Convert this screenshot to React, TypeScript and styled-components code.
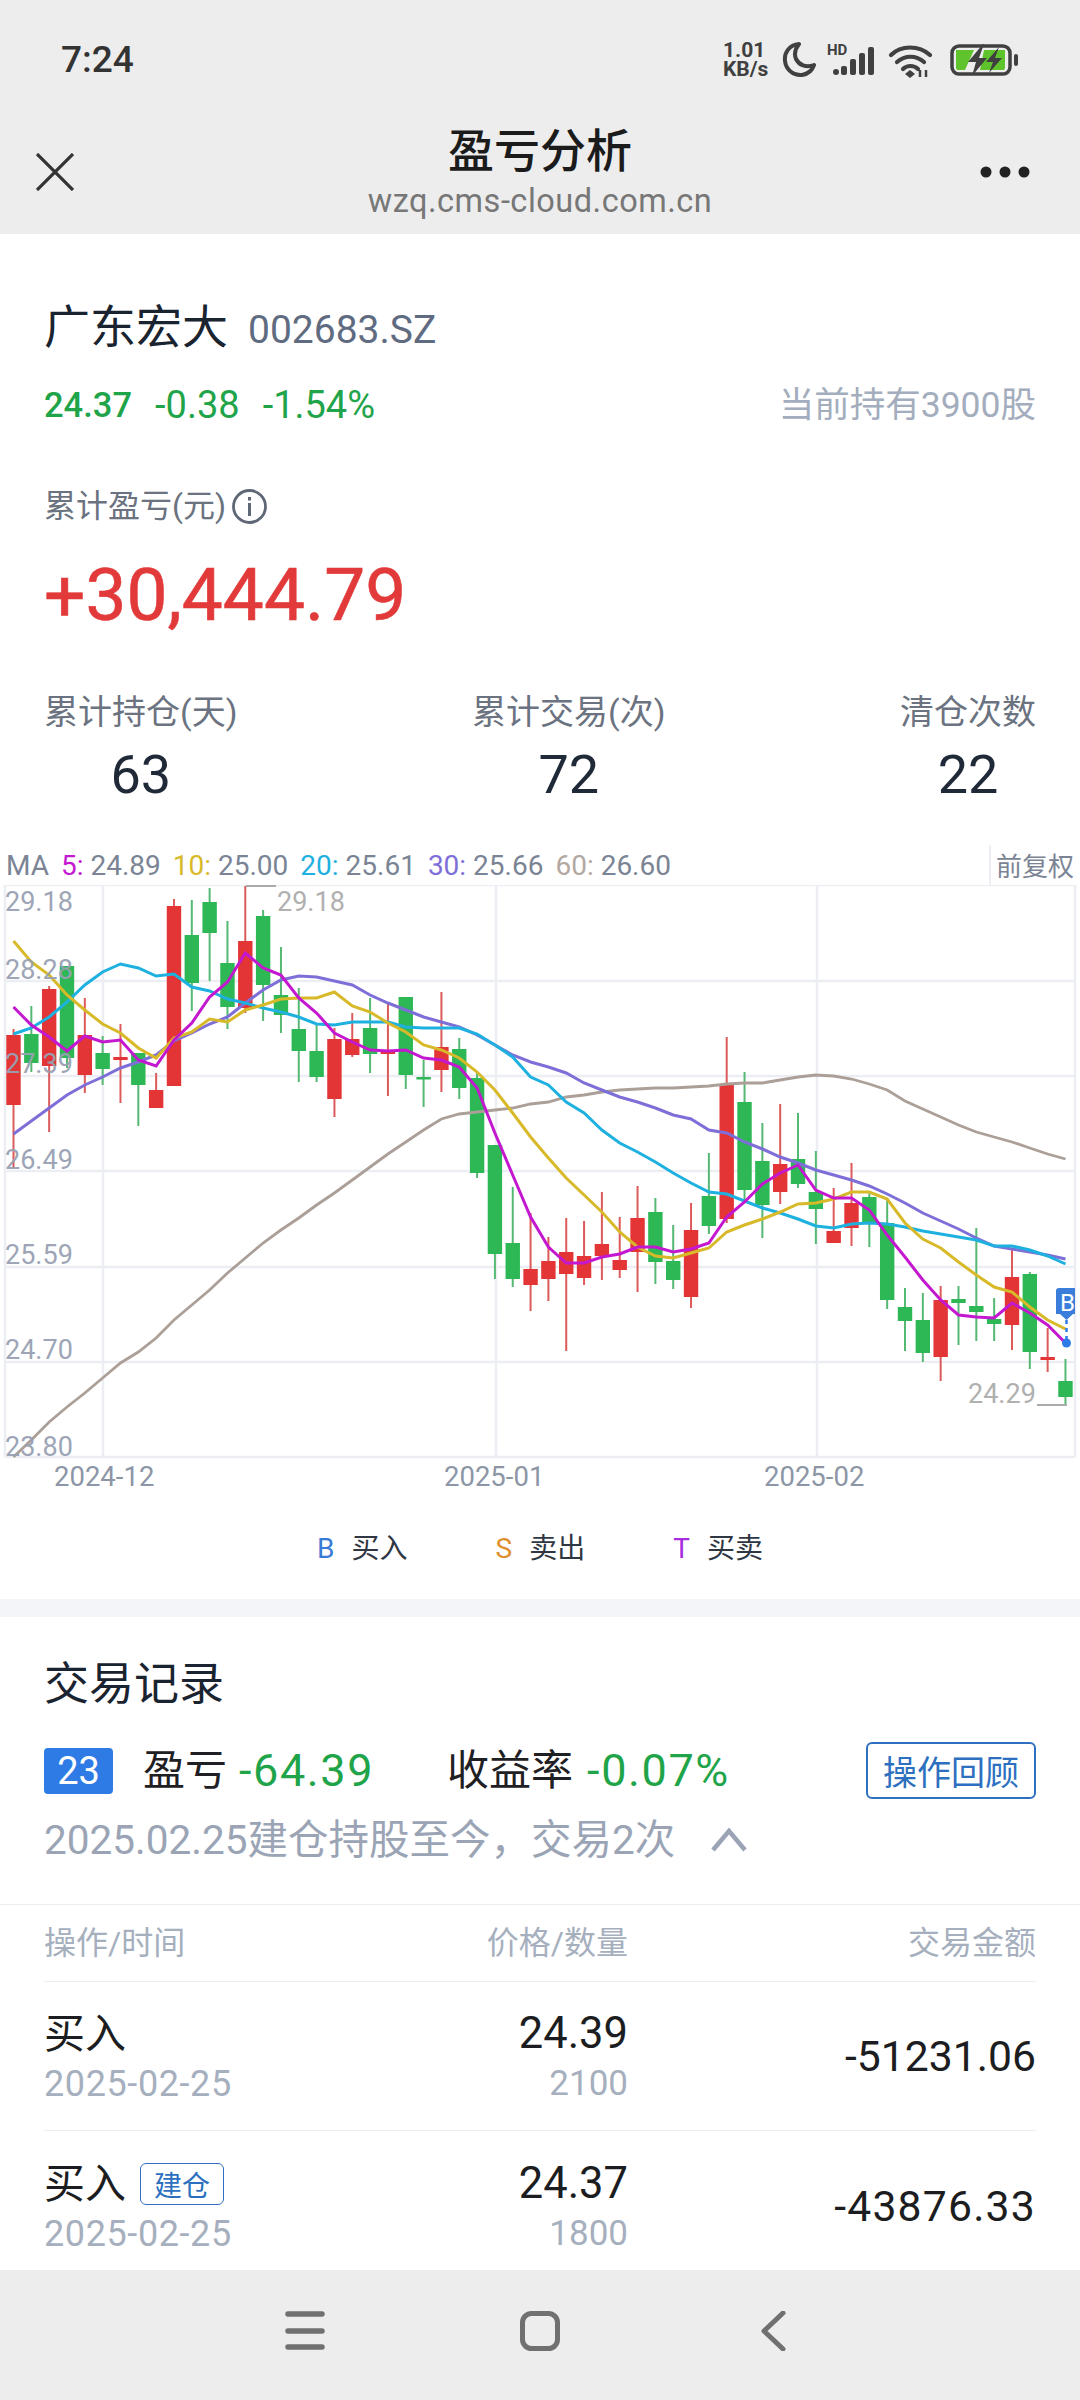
import React from 'react';
import styled, { createGlobalStyle } from 'styled-components';

const CJK = '"Noto Sans CJK SC", sans-serif';
const FONT = `Roboto, ${CJK}`;

const Global = createGlobalStyle`
  html, body { margin: 0; padding: 0; background: #fff; }
  body { font-family: ${FONT}; }
  * { box-sizing: border-box; }
`;

const Page = styled.div`
  width: 1080px; height: 2400px; overflow: hidden; background: #fff;
  display: flex; flex-direction: column; font-family: ${FONT};
  > * { flex: none; }
`;
const Chrome = styled.header`
  background: #ededed; height: 234px; display: flex; flex-direction: column;
`;
const StatusBar = styled.div`
  height: 119px; padding: 0 60px 0 61px; display: flex; align-items: center; justify-content: space-between;
`;
const Clock = styled.span`
  font-size: 37px; font-weight: 500; color: #333; font-family: Roboto, sans-serif;
`;
const StatusIcons = styled.div`
  display: flex; align-items: center; height: 40px;
`;
const Speed = styled.div`
  width: 57px; display: flex; flex-direction: column; font: 700 21px/19px Roboto, sans-serif; color: #404040;
`;
const NavBar = styled.div`
  height: 115px; padding: 0 50px 13px 36px; display: grid; grid-template-columns: 108px 1fr 94px; align-items: center;
`;
const TitleBlock = styled.div`
  align-self: start; display: flex; flex-direction: column; align-items: center;
`;
const PageTitle = styled.div`
  font: 500 46px/56px ${CJK}; color: #1b1b1b;
`;
const PageUrl = styled.div`
  margin-top: 2px; font: 400 32.5px/48px Roboto, sans-serif; color: #777; letter-spacing: .5px;
`;
const MoreIcon = styled.svg`
  justify-self: end;
`;

const Summary = styled.section`
  padding: 63px 44px 0 44px;
`;
const NameRow = styled.div`
  height: 52px; display: flex; align-items: baseline; gap: 20px;
`;
const StockName = styled.span`
  font: 400 46px/52px ${CJK}; color: #1a2330;
`;
const StockCode = styled.span`
  font: 400 39px/52px Roboto, sans-serif; color: #5f6b80;
`;
const PriceRow = styled.div`
  height: 50px; margin-top: 31px; display: flex; align-items: center; gap: 23px;
`;
const Quote = styled.span<{ $strong?: boolean }>`
  font: ${p => (p.$strong ? '500 34.5px' : '400 38px')}/50px Roboto, sans-serif; color: #1fa44a;
`;
const Holding = styled.span`
  margin-left: auto; font: 400 35.5px/50px ${FONT}; color: #a3adbd;
`;
const ProfitLabel = styled.div`
  height: 44px; margin-top: 54px; display: flex; align-items: center; gap: 6px;
  font: 400 32px/44px ${FONT}; color: #6b7280;
`;
const ProfitValue = styled.div`
  height: 90px; margin-top: 22px; font: 400 73px/90px Roboto, sans-serif; color: #e23a3a;
  -webkit-text-stroke: .6px #e23a3a;
`;
const Stats = styled.div`
  margin-top: 50px; display: flex; justify-content: space-between;
`;
const Stat = styled.div`
  display: flex; flex-direction: column; align-items: center;
`;
const StatLabel = styled.div`
  font: 400 34px/44px ${FONT}; color: #6b7280;
`;
const StatValue = styled.div`
  margin-top: 11px; font: 400 54px/60px Roboto, sans-serif; color: #1f2937;
`;

const MaLegend = styled.div`
  margin-top: 40px; height: 40px; padding: 2px 5px 0 6px; display: flex; align-items: center;
  font: 400 28px/38px Roboto, sans-serif; color: #7b8494; white-space: nowrap; gap: 12px;
`;
const MaItem = styled.span``;
const MaKey = styled.span<{ $c: string }>`
  color: ${p => p.$c};
`;
const AdjustBox = styled.div`
  margin-left: auto; width: 86px; height: 40px; margin-top: -2px; border-left: 2px solid #eceef3; padding-left: 5px;
  font: 400 26px/40px ${CJK}; color: #7b8494;
`;
const ChartSvg = styled.svg`
  display: block; width: 1080px; height: 612px; flex: none;
`;
const TradeLegend = styled.div`
  height: 102px; display: flex; justify-content: center; align-items: center; gap: 88px;
  padding-top: 2px;
`;
const TradeKey = styled.span`
  display: flex; align-items: center; gap: 17px; font: 400 28px/40px ${FONT}; color: #2f3743;
`;
const KeyLetter = styled.span<{ $c: string }>`
  color: ${p => p.$c}; font-size: 28px;
`;
const Band = styled.div`
  height: 18px; background: #f4f5f9;
`;
const Records = styled.section`
  height: 653px; overflow: hidden; display: flex; flex-direction: column;
`;
const RecordsHead = styled.div`
  padding: 0 44px;
`;
const RecordsTitle = styled.h2`
  margin: 37px 0 0; font: 400 45px/54px ${CJK}; color: #1a2330;
`;
const TradeLine = styled.div`
  height: 58px; margin-top: 33.5px; display: flex; align-items: center;
`;
const TradeIndex = styled.span`
  width: 69px; height: 46px; background: #2f7be6; border-radius: 4px; color: #fff;
  display: flex; align-items: center; justify-content: center; font: 400 38px/46px Roboto, sans-serif;
`;
const TradeMetric = styled.span<{ $left: number; $gap: number }>`
  margin-left: ${p => p.$left}px; font: 400 42px/58px ${FONT}; color: #1f2023; display: flex; gap: ${p => p.$gap}px;
`;
const TradeGreen = styled.span`
  color: #1fa44a; font-size: 45px; letter-spacing: 1.6px;
`;
const ReviewButton = styled.button`
  margin-left: auto; width: 170px; height: 57px; border: 2px solid #2f6fbf; border-radius: 6px; background: #fff;
  color: #2d70c0; font: 400 34px/52px ${CJK}; padding: 0; white-space: nowrap;
`;
const HistoryNote = styled.div`
  margin-top: 15.5px; height: 50px; display: flex; align-items: center; gap: 36px;
  font: 400 40.5px/50px ${FONT}; color: #9aa4b5;
`;
const FullRule = styled.div`
  height: 1px; margin-top: 39px; background: #ececec; flex: none;
`;
const Table = styled.div`
  padding: 0 44px;
`;
const Row = styled.div<{ $h: number; $line?: boolean }>`
  height: ${p => p.$h}px; display: grid; grid-template-columns: 1fr 200px 408px; align-items: center;
  border-bottom: ${p => (p.$line ? '1px solid #ececec' : 'none')};
`;
const HeadCell = styled.div<{ $right?: boolean }>`
  font: 400 32px/40px ${FONT}; color: #a6afbe; text-align: ${p => (p.$right ? 'right' : 'left')};
`;
const Cell = styled.div<{ $right?: boolean }>`
  padding-top: 4px; display: flex; flex-direction: column; align-items: ${p => (p.$right ? 'flex-end' : 'flex-start')};
`;
const Main = styled.div`
  display: flex; align-items: center; gap: 14px; height: 52px; font: 400 41px/52px ${FONT}; color: #1c1d20;
`;
const Price = styled.div`
  height: 52px; font: 400 43.5px/52px Roboto, sans-serif; color: #1c1d20;
`;
const DateText = styled.div`
  height: 48px; font: 400 36px/48px Roboto, sans-serif; color: #a6afbe; letter-spacing: .6px;
`;
const Qty = styled.div`
  height: 48px; font: 400 35px/48px Roboto, sans-serif; color: #a6afbe;
`;
const Amount = styled.div<{ $spread?: boolean }>`
  font: 400 42.7px/52px Roboto, sans-serif; color: #1c1d20; text-align: right;
  letter-spacing: ${p => (p.$spread ? '1.2px' : '0')};
`;
const OpenTag = styled.span`
  width: 84px; height: 42px; border: 1px solid #2f6fbf; border-radius: 6px; color: #2d70c0;
  display: flex; align-items: center; justify-content: center; font: 400 28px/40px ${CJK};
`;
const BottomBar = styled.footer`
  height: 130px; background: #ededed;
  display: flex; align-items: center; justify-content: center; padding: 0 9px 8px 0;
`;
const NavIcon = styled.svg`
  display: block; flex: none;
`;

// ---- chart data: [isRed, wickTop, bodyTop, bodyBottom, wickBottom], absolute page pixels
type Candle = [0 | 1, number, number, number, number];
const candles: Candle[] = [
  [1,1029,1035,1105,1168],[0,1006,1034,1063,1072],[1,986,989,1066,1132],[0,966,966,1058,1068],
  [1,998,1035,1075,1093],[0,1036,1053,1069,1085],[1,1024,1057,1060,1103],[0,1053,1053,1085,1126],
  [1,1073,1090,1108,1108],[1,899,906,1086,1086],[0,900,935,983,1011],[0,888,902,933,981],
  [0,921,963,1007,1029],[1,886,941,1008,1013],[0,910,916,985,1021],[0,947,995,1015,1033],
  [0,988,1029,1051,1082],[0,1025,1051,1077,1082],[1,1028,1039,1099,1117],[1,1013,1039,1055,1057],
  [0,998,1028,1054,1073],[1,1003,1050,1054,1096],[0,997,997,1075,1089],[0,1060,1077,1079,1107],
  [1,992,1047,1070,1092],[0,1038,1049,1088,1099],[0,1073,1078,1173,1178],[0,1145,1145,1254,1279],
  [0,1187,1243,1279,1287],[1,1213,1269,1285,1311],[1,1237,1261,1279,1301],[1,1218,1252,1274,1351],
  [1,1221,1256,1278,1285],[1,1192,1244,1256,1280],[1,1217,1260,1270,1278],[1,1186,1218,1252,1292],
  [0,1198,1212,1262,1284],[0,1225,1261,1280,1289],[1,1203,1230,1297,1308],[0,1153,1196,1226,1234],
  [1,1037,1085,1219,1223],[0,1072,1102,1190,1200],[0,1123,1161,1205,1238],[1,1104,1164,1192,1204],
  [0,1113,1159,1184,1188],[0,1151,1192,1209,1244],[1,1188,1231,1243,1243],[1,1163,1203,1228,1246],
  [0,1193,1197,1223,1247],[0,1198,1223,1300,1309],[0,1288,1307,1321,1351],[0,1293,1320,1353,1362],
  [1,1286,1300,1357,1381],[0,1286,1299,1303,1345],[0,1228,1306,1312,1341],[0,1298,1319,1324,1341],
  [1,1250,1277,1325,1350],[0,1272,1274,1352,1369],[1,1328,1357,1360,1372],[0,1359,1381,1397,1405],
];
const ma5 = [1007,1025,1037,1051,1036,1042,1040,1060,1066,1040,1023,997,982,953,968,975,998,1013,1033,1042,1050,1051,1050,1058,1060,1067,1088,1133,1175,1217,1247,1263,1263,1257,1254,1247,1247,1252,1249,1243,1217,1202,1184,1173,1165,1190,1198,1198,1210,1235,1257,1280,1300,1315,1317,1318,1303,1313,1325,1343];
const ma10 = [941,962,975,995,1010,1024,1033,1048,1058,1038,1032,1019,1022,1010,1005,999,998,998,992,1006,1012,1023,1032,1045,1050,1058,1072,1090,1113,1137,1158,1178,1195,1212,1232,1247,1256,1258,1253,1248,1232,1225,1219,1212,1204,1203,1199,1192,1192,1199,1223,1239,1248,1262,1275,1287,1292,1307,1320,1329];
const ma20 = [1034,1028,1017,1002,985,972,964,968,976,974,987,991,999,1003,1008,1012,1017,1024,1025,1022,1022,1022,1027,1028,1028,1028,1034,1045,1057,1077,1085,1102,1113,1130,1143,1152,1162,1173,1183,1192,1194,1201,1208,1213,1219,1226,1228,1224,1223,1224,1227,1231,1234,1237,1240,1246,1246,1250,1256,1264];
const ma30 = [1134,1121,1108,1095,1085,1077,1068,1062,1055,1041,1033,1024,1017,1003,990,980,976,977,981,985,995,1003,1010,1017,1022,1027,1035,1045,1055,1062,1067,1073,1083,1090,1097,1102,1108,1115,1119,1130,1133,1142,1149,1157,1163,1170,1175,1180,1186,1194,1203,1213,1221,1229,1238,1246,1249,1252,1255,1259];
const ma60 = [1457,1440,1422,1407,1393,1378,1363,1352,1338,1320,1305,1290,1273,1258,1243,1230,1218,1205,1193,1180,1167,1154,1142,1130,1119,1114,1112,1110,1108,1104,1102,1097,1095,1092,1090,1089,1088,1088,1087,1086,1084,1083,1083,1080,1077,1075,1076,1079,1084,1090,1101,1109,1117,1125,1132,1137,1142,1148,1154,1159];

const cx = (i: number) => 13.5 + 17.83 * i;
const pts = (a: number[]) => a.map((y, i) => `${cx(i).toFixed(1)},${y}`).join(' ');
const gridY = [885, 981, 1076, 1171, 1267, 1362, 1457];
const gridX = [5, 103, 496, 817, 1075];
const axis: [string, number][] = [['29.18', 911], ['28.28', 979], ['27.39', 1073], ['26.49', 1169], ['25.59', 1264], ['24.70', 1359], ['23.80', 1456]];
const AxisText = styled.text<{ $size?: number }>`
  font: 400 ${p => p.$size ?? 27}px Roboto, sans-serif;
`;

const KChart = () => (
  <ChartSvg viewBox="0 885 1080 612">
    {gridY.map(y => <line key={y} x1="5" x2="1075" y1={y} y2={y} stroke="#eceef3" strokeWidth="2.5" />)}
    {gridX.map(x => <line key={x} x1={x} x2={x} y1="885" y2="1457" stroke="#eceef3" strokeWidth="2.5" />)}
    {candles.map(([red, hi, top, bot, lo], i) => {
      const c = red ? '#e33535' : '#2db755';
      const w = red ? '#dc5a5a' : '#55b873';
      const x = cx(i);
      return (
        <g key={i}>
          <line x1={x} x2={x} y1={hi} y2={lo} stroke={w} strokeWidth="2" />
          <rect x={x - 7.2} y={top} width="14.4" height={Math.max(bot - top, 2.5)} fill={c} />
        </g>
      );
    })}
    <polyline points={pts(ma60)} fill="none" stroke="#ab9f98" strokeWidth="2.8" />
    <polyline points={pts(ma30)} fill="none" stroke="#7e6fd8" strokeWidth="3" />
    <polyline points={pts(ma20)} fill="none" stroke="#1eb1e0" strokeWidth="3" />
    <polyline points={pts(ma10)} fill="none" stroke="#d8b92a" strokeWidth="3" />
    <polyline points={pts(ma5)} fill="none" stroke="#c418d0" strokeWidth="3" />
    {axis.map(([t, y]) => (
      <AxisText key={t} x="5" y={y} fill="#98a1b3" opacity=".95">{t}</AxisText>
    ))}
    <line x1="246" x2="276" y1="886" y2="886" stroke="#aaa" strokeWidth="2" />
    <AxisText x="277" y="911" fill="#b0b0b0">29.18</AxisText>
    <AxisText x="968" y="1403" fill="#b0b0b0">24.29</AxisText>
    <line x1="1037" x2="1067" y1="1405" y2="1405" stroke="#aaa" strokeWidth="2" />
    <line x1="1066.5" x2="1066.5" y1="1320" y2="1343" stroke="#2f7be6" strokeWidth="2.5" strokeDasharray="4 4" />
    <circle cx="1066.5" cy="1343" r="4.5" fill="#2f7be6" />
    <path d="M1056 1291q0-3 3-3h16v26h-2l-6.500 6-6.500-6h-4z" fill="#3b7ddb" />
    <AxisText x="1060" y="1311" fill="#fff" $size={24}>B</AxisText>
    <AxisText x="54" y="1486" fill="#8d96a6" $size={27.5}>2024-12</AxisText>
    <AxisText x="444" y="1486" fill="#8d96a6" $size={27.5}>2025-01</AxisText>
    <AxisText x="764" y="1486" fill="#8d96a6" $size={27.5}>2025-02</AxisText>
  </ChartSvg>
);

const Moon = () => (
  <NavIcon width="38" height="36" viewBox="0 0 38 36">
    <path d="M19 2C9 3 4 11 5 19c1 9 9 15 17 14 6-1 10-4 12-10-8 3-15 0-18-6-2-5-1-10 3-15z" fill="none" stroke="#404040" strokeWidth="4" strokeLinejoin="round" />
  </NavIcon>
);
const Signal = () => (
  <NavIcon width="54" height="36" viewBox="0 0 54 36" style={{ marginLeft: 6 }}>
    <text x="3" y="13" fontFamily="Roboto, sans-serif" fontWeight="700" fontSize="15" fill="#404040">HD</text>
    <g fill="#404040">
      <circle cx="12" cy="30" r="3" />
      <rect x="17" y="24" width="6" height="9" rx="2" />
      <rect x="26" y="17" width="6" height="16" rx="2" />
      <rect x="35" y="11" width="6" height="22" rx="2" />
      <rect x="44" y="5" width="6" height="28" rx="2" />
    </g>
  </NavIcon>
);
const Wifi = () => (
  <NavIcon width="46" height="36" viewBox="0 0 46 36" style={{ marginLeft: 10 }}>
    <g fill="none" stroke="#404040" strokeWidth="4.2" strokeLinecap="round">
      <path d="M3 13C13 3 31 3 42 13" />
      <path d="M9 20c8-7 19-7 27 0" />
      <path d="M15 27c4-4 11-4 15 0" />
    </g>
    <path d="M22 28l5 4-5 4-5-4z" fill="#404040" />
    <path d="M32 28v7M38 28v7" stroke="#404040" strokeWidth="2.5" />
  </NavIcon>
);
const Battery = () => (
  <NavIcon width="70" height="32" viewBox="0 0 70 32" style={{ marginLeft: 16 }}>
    <rect x="2" y="2" width="58" height="28" rx="7" fill="none" stroke="#404040" strokeWidth="3.5" />
    <rect x="64" y="10" width="4" height="12" rx="2" fill="#404040" />
    <path d="M6 6h18l-9 20H8q-2 0-2-2zM34 6h21v18q0 2-2 2H30z" fill="#5fc32b" />
    <path d="M33 0L18 18h8l-4 14 15-18h-8l5-14zM49 3L36 18h7l-4 11 13-15h-7z" fill="#404040" />
  </NavIcon>
);

const Stock = () => (
  <Summary>
    <NameRow><StockName>广东宏大</StockName><StockCode>002683.SZ</StockCode></NameRow>
    <PriceRow>
      <Quote $strong>24.37</Quote><Quote>-0.38</Quote><Quote>-1.54%</Quote>
      <Holding>当前持有3900股</Holding>
    </PriceRow>
    <ProfitLabel>
      累计盈亏(元)
      <svg width="35" height="35" viewBox="0 0 35 35">
        <circle cx="17.5" cy="17.5" r="16" fill="none" stroke="#5f6675" strokeWidth="2.8" />
        <rect x="16" y="14" width="3" height="13" fill="#5f6675" />
        <rect x="16" y="8" width="3" height="3.5" fill="#5f6675" />
      </svg>
    </ProfitLabel>
    <ProfitValue>+30,444.79</ProfitValue>
    <Stats>
      <Stat><StatLabel>累计持仓(天)</StatLabel><StatValue>63</StatValue></Stat>
      <Stat><StatLabel>累计交易(次)</StatLabel><StatValue>72</StatValue></Stat>
      <Stat><StatLabel>清仓次数</StatLabel><StatValue>22</StatValue></Stat>
    </Stats>
  </Summary>
);

const ma: [string, string, string][] = [
  ['5:', '#c418d0', '24.89'], ['10:', '#d8b92a', '25.00'], ['20:', '#1eb1e0', '25.61'], ['30:', '#7e6fd8', '25.66'], ['60:', '#b3a8a1', '26.60'],
];

export default function App() {
  return (
    <Page>
      <Global />
      <Chrome>
        <StatusBar>
          <Clock>7:24</Clock>
          <StatusIcons>
            <Speed><span>1.01</span><span>KB/s</span></Speed>
            <Moon />
            <Signal />
            <Wifi />
            <Battery />
          </StatusIcons>
        </StatusBar>
        <NavBar>
          <svg width="38" height="38" viewBox="0 0 38 38">
            <path d="M1 1l36 36M37 1L1 37" stroke="#333" strokeWidth="3.2" />
          </svg>
          <TitleBlock><PageTitle>盈亏分析</PageTitle><PageUrl>wzq.cms-cloud.com.cn</PageUrl></TitleBlock>
          <MoreIcon width="50" height="12" viewBox="0 0 50 12">
            <circle cx="6" cy="6" r="5.5" fill="#222" /><circle cx="25" cy="6" r="5.5" fill="#222" /><circle cx="44" cy="6" r="5.5" fill="#222" />
          </MoreIcon>
        </NavBar>
      </Chrome>
      <Stock />
      <MaLegend>
        <span>MA</span>
        {ma.map(([k, c, v]) => <MaItem key={k}><MaKey $c={c}>{k}</MaKey> {v}</MaItem>)}
        <AdjustBox>前复权</AdjustBox>
      </MaLegend>
      <KChart />
      <TradeLegend>
        <TradeKey><KeyLetter $c="#3a7bd5">B</KeyLetter>买入</TradeKey>
        <TradeKey><KeyLetter $c="#e0902f">S</KeyLetter>卖出</TradeKey>
        <TradeKey><KeyLetter $c="#a52fe0">T</KeyLetter>买卖</TradeKey>
      </TradeLegend>
      <Band />
      <Records>
        <RecordsHead>
          <RecordsTitle>交易记录</RecordsTitle>
          <TradeLine>
            <TradeIndex>23</TradeIndex>
            <TradeMetric $left={30} $gap={12}>盈亏 <TradeGreen>-64.39</TradeGreen></TradeMetric>
            <TradeMetric $left={73} $gap={14}>收益率 <TradeGreen>-0.07%</TradeGreen></TradeMetric>
            <ReviewButton>操作回顾</ReviewButton>
          </TradeLine>
          <HistoryNote>
            2025.02.25建仓持股至今，交易2次
            <svg width="36" height="24" viewBox="0 0 36 24">
              <path d="M2 22L18 3l16 19" fill="none" stroke="#9aa4b5" strokeWidth="4.5" />
            </svg>
          </HistoryNote>
        </RecordsHead>
        <FullRule />
        <Table>
          <Row $h={77} $line>
            <HeadCell>操作/时间</HeadCell>
            <HeadCell $right>价格/数量</HeadCell>
            <HeadCell $right>交易金额</HeadCell>
          </Row>
          <Row $h={149} $line>
            <Cell><Main>买入</Main><DateText>2025-02-25</DateText></Cell>
            <Cell $right><Price>24.39</Price><Qty>2100</Qty></Cell>
            <Amount>-51231.06</Amount>
          </Row>
          <Row $h={149}>
            <Cell><Main>买入<OpenTag>建仓</OpenTag></Main><DateText>2025-02-25</DateText></Cell>
            <Cell $right><Price>24.37</Price><Qty>1800</Qty></Cell>
            <Amount $spread>-43876.33</Amount>
          </Row>
        </Table>
      </Records>
      <BottomBar>
        <NavIcon width="40" height="40" viewBox="0 0 40 40" style={{ marginRight: 195 }}>
          <path d="M3 3h34M3 20h34M3 36h34" stroke="#707070" strokeWidth="5.5" strokeLinecap="round" />
        </NavIcon>
        <NavIcon width="40" height="40" viewBox="0 0 40 40" style={{ marginRight: 200 }}>
          <rect x="2.5" y="2.5" width="35" height="35" rx="9" fill="none" stroke="#707070" strokeWidth="5" />
        </NavIcon>
        <NavIcon width="26" height="40" viewBox="0 0 26 40">
          <path d="M23 2L4 20l19 18" fill="none" stroke="#707070" strokeWidth="5" strokeLinecap="round" strokeLinejoin="round" />
        </NavIcon>
      </BottomBar>
    </Page>
  );
}
